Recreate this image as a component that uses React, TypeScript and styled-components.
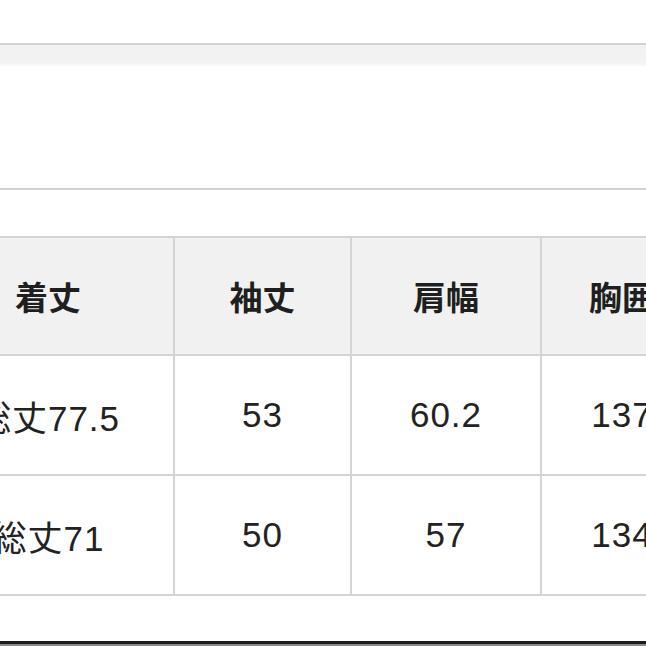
import React from "react";
import styled, { createGlobalStyle } from "styled-components";

const GlobalStyle = createGlobalStyle`
  html, body {
    margin: 0;
    padding: 0;
    background: #ffffff;
    overflow: hidden;
  }
  body {
    font-family: "Liberation Sans", "Noto Sans CJK JP", sans-serif;
    color: #222222;
  }
`;

const Page = styled.div`
  width: 646px;
  height: 646px;
  overflow: hidden;
  display: flex;
  flex-direction: column;
  background: #ffffff;
`;

const TopSpace = styled.div`
  height: 43px;
  flex-shrink: 0;
`;

const Band = styled.div`
  height: 21px;
  flex-shrink: 0;
  border-top: 2px solid #d2d2d2;
  background: linear-gradient(#f1f1f1 0%, #f3f3f3 85%, #fbfbfb 100%);
`;

const Section = styled.div`
  height: 122px;
  flex-shrink: 0;
  border-bottom: 2px solid #d0d0d0;
`;

const TableWrap = styled.div`
  margin-top: 46px;
  flex-shrink: 0;
  overflow: hidden;
`;

const Table = styled.table`
  margin-left: -79px;
  border-collapse: collapse;
  table-layout: fixed;
  width: 781px;
`;

const HeadCell = styled.th`
  height: 116px;
  padding: 0;
  background: #f1f1f1;
  border: 2px solid #d4d4d4;
  font-size: 33px;
  font-weight: 700;
  text-align: center;
  color: #1f1f1f;
`;

const Cell = styled.td`
  height: 118px;
  padding: 0;
  border: 2px solid #d4d4d4;
  font-size: 35px;
  letter-spacing: 1px;
  font-weight: 400;
  text-align: center;
  color: #222222;
`;

const Filler = styled.div`
  flex: 1;
`;

const BottomEdge = styled.div`
  height: 2px;
  flex-shrink: 0;
  border-top: 3px solid #1c1c1c;
  background: #8a8a8a;
`;

const columns = [
  { label: "着丈", width: 252 },
  { label: "袖丈", width: 177 },
  { label: "肩幅", width: 190 },
  { label: "胸囲", width: 162 },
];

const rows = [
  ["総丈77.5", "53", "60.2", "137"],
  ["総丈71", "50", "57", "134"],
];

export default function App(): React.ReactElement {
  return (
    <>
      <GlobalStyle />
      <Page>
        <TopSpace />
        <Band />
        <Section />
        <TableWrap>
          <Table>
            <colgroup>
              {columns.map((c) => (
                <col key={c.label} style={{ width: c.width }} />
              ))}
            </colgroup>
            <thead>
              <tr>
                {columns.map((c) => (
                  <HeadCell key={c.label}>{c.label}</HeadCell>
                ))}
              </tr>
            </thead>
            <tbody>
              {rows.map((r, i) => (
                <tr key={i}>
                  {r.map((v, j) => (
                    <Cell key={j}>{v}</Cell>
                  ))}
                </tr>
              ))}
            </tbody>
          </Table>
        </TableWrap>
        <Filler />
        <BottomEdge />
      </Page>
    </>
  );
}
